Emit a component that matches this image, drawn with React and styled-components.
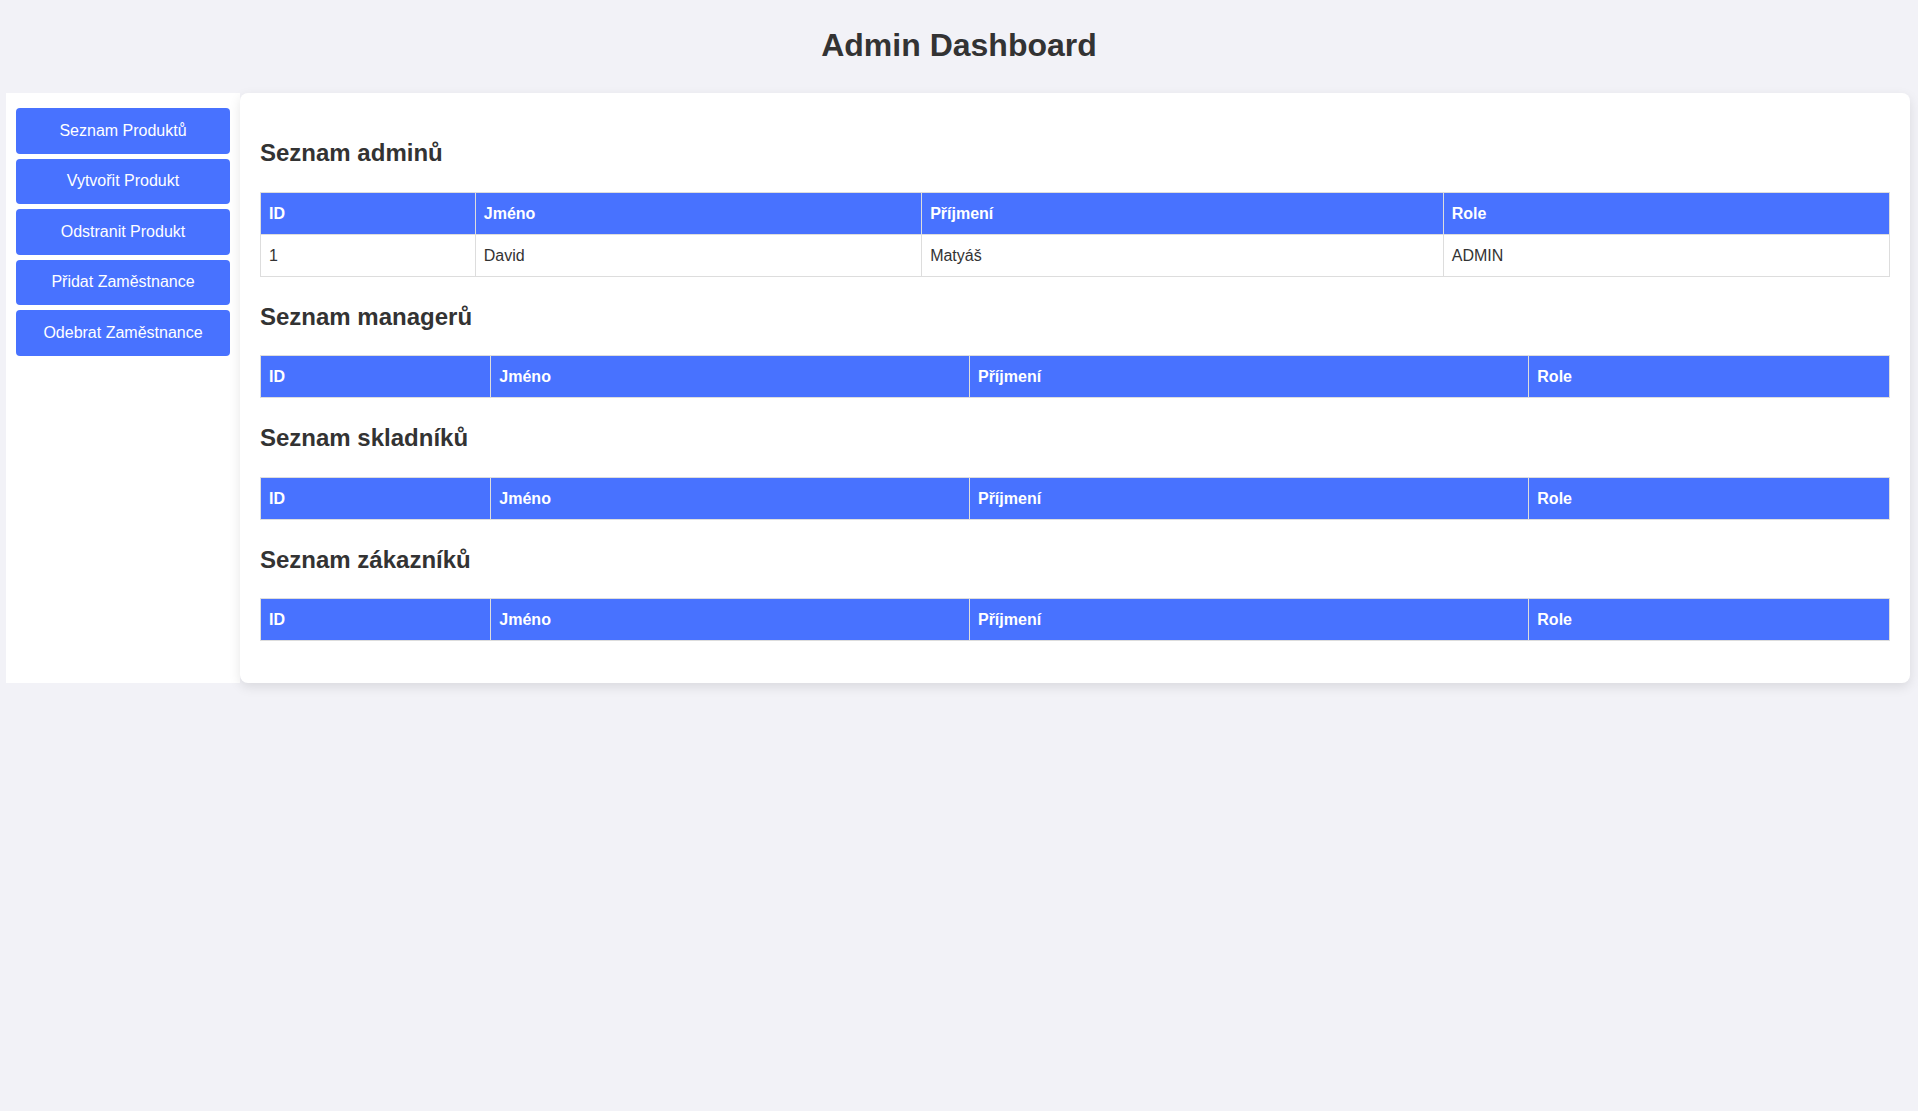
import React from 'react';
import styled, { createGlobalStyle } from 'styled-components';

const GlobalStyle = createGlobalStyle`
  body {
    margin: 0;
    background: #f2f2f7;
    font-family: "Liberation Sans", Arial, sans-serif;
    color: #333;
  }
`;

const Page = styled.div`
  min-height: 100vh;
`;

const Title = styled.h1`
  margin: 0;
  padding: 27px 0 15px;
  text-align: center;
  font-size: 32px;
  line-height: 37px;
  font-weight: bold;
  color: #333;
`;

const Layout = styled.div`
  display: flex;
  align-items: stretch;
  padding: 14px 8px 0 6px;
`;

const Sidebar = styled.nav`
  width: 234px;
  box-sizing: border-box;
  padding: 15px 10px 10px;
  background: #fff;
  display: flex;
  flex-direction: column;
  gap: 5px;
`;

const NavButton = styled.button`
  height: 45.5px;
  margin: 0;
  border: none;
  border-radius: 4px;
  background: #4872ff;
  color: #fff;
  font-family: "Liberation Sans", Arial, sans-serif;
  font-size: 16px;
  cursor: pointer;
`;

const Main = styled.main`
  flex: 1;
  background: #fff;
  border-radius: 8px;
  box-shadow: 0 4px 12px rgba(0, 0, 0, 0.1);
  padding: 20px 20px 22px;
`;

const SectionTitle = styled.h2`
  margin: 26px 0 25px;
  font-size: 24px;
  line-height: 27.6px;
  font-weight: bold;
  color: #333;
`;

const Table = styled.table`
  width: 100%;
  border-collapse: collapse;
  margin-bottom: 20px;
  font-size: 16px;
`;

const Th = styled.th`
  background: #4872ff;
  color: #fff;
  text-align: left;
  font-weight: bold;
  padding: 11px 8px;
  line-height: 19px;
  border: 1px solid #ddd;
`;

const Td = styled.td`
  padding: 11px 8px;
  line-height: 19px;
  border: 1px solid #ddd;
  color: #333;
`;

const columns = ['ID', 'Jméno', 'Příjmení', 'Role'];

const sections = [
  { title: 'Seznam adminů', rows: [{ id: 1, name: 'David', surname: 'Matyáš', role: 'ADMIN' }] },
  { title: 'Seznam managerů', rows: [] },
  { title: 'Seznam skladníků', rows: [] },
  { title: 'Seznam zákazníků', rows: [] },
];

const navItems = [
  'Seznam Produktů',
  'Vytvořit Produkt',
  'Odstranit Produkt',
  'Přidat Zaměstnance',
  'Odebrat Zaměstnance',
];

function UserTable({ rows }) {
  return (
    <Table>
      <thead>
        <tr>
          {columns.map((c) => (
            <Th key={c}>{c}</Th>
          ))}
        </tr>
      </thead>
      <tbody>
        {rows.map((r) => (
          <tr key={r.id}>
            <Td>{r.id}</Td>
            <Td>{r.name}</Td>
            <Td>{r.surname}</Td>
            <Td>{r.role}</Td>
          </tr>
        ))}
      </tbody>
    </Table>
  );
}

export default function App() {
  return (
    <Page>
      <GlobalStyle />
      <Title>Admin Dashboard</Title>
      <Layout>
        <Sidebar>
          {navItems.map((item) => (
            <NavButton key={item}>{item}</NavButton>
          ))}
        </Sidebar>
        <Main>
          {sections.map((s) => (
            <section key={s.title}>
              <SectionTitle>{s.title}</SectionTitle>
              <UserTable rows={s.rows} />
            </section>
          ))}
        </Main>
      </Layout>
    </Page>
  );
}
